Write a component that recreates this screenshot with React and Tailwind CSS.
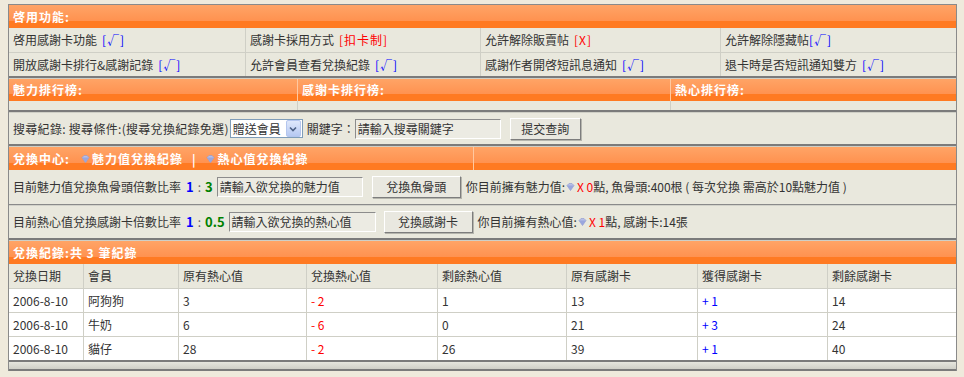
import React from "react";

const font = { fontFamily: '"Noto Sans CJK TC", "Liberation Sans", sans-serif' };

const headBg =
  "bg-[linear-gradient(#ffa466,#ff9250_68%,#ff7a22_70%,#ff7a22)] text-white font-bold text-[12px] tracking-[1px]";

function Gem() {
  return (
    <svg width="9" height="8" viewBox="0 0 9 8" className="inline-block mx-[1px] align-middle">
      <polygon points="1,2.5 3,0.5 6,0.5 8,2.5 4.5,7.5" fill="#b7bfe6" stroke="#8e99cf" strokeWidth="0.6" />
      <polygon points="1,2.5 8,2.5 4.5,7.5" fill="#9aa6dd" />
    </svg>
  );
}

function Sep() {
  return <div className="h-[3px] border-t-2 border-[#7b7b7b] bg-[#cfcfc6]" />;
}

function Ok({ gap = true }) {
  return <span className={`text-[#0000ff] tracking-[1px] ${gap ? "ml-[5px]" : ""}`}>[√]</span>;
}

function Bad({ children }) {
  return <span className="text-[#ff0000] ml-[5px] tracking-[1px]">[{children}]</span>;
}

function Field({ value, w }) {
  return (
    <div
      className={`${w} h-[20px] bg-[#ecebe3] border border-t-[#8c8c8c] border-l-[#8c8c8c] border-b-white border-r-white flex items-center px-[2px] text-[#333] whitespace-nowrap overflow-hidden`}
    >
      {value}
    </div>
  );
}

function Btn({ children, w }) {
  return (
    <div
      className={`${w} h-[22px] bg-[#e9e8e0] border border-t-white border-l-white border-b-[#7d7d7d] border-r-[#7d7d7d] shadow-[1px_1px_0_#b5b5ad] flex items-center justify-center text-[#333]`}
    >
      {children}
    </div>
  );
}

const features = [
  [<>啓用感謝卡功能<Ok /></>, <>感謝卡採用方式<Bad>扣卡制</Bad></>, <>允許解除販賣帖<Bad>X</Bad></>, <>允許解除隱藏帖<Ok gap={false} /></>],
  [<>開放感謝卡排行&amp;感謝記錄<Ok /></>, <>允許會員查看兌換紀錄<Ok /></>, <>感謝作者開啓短訊息通知<Ok /></>, <>退卡時是否短訊通知雙方<Ok /></>],
];

const records = [
  ["2006-8-10", "阿狗狗", "3", "- 2", "1", "13", "+ 1", "14"],
  ["2006-8-10", "牛奶", "6", "- 6", "0", "21", "+ 3", "24"],
  ["2006-8-10", "貓仔", "28", "- 2", "26", "39", "+ 1", "40"],
];

const cols = "grid grid-cols-[74px_95px_128px_131px_129px_131px_130px_1fr]";

export default function App() {
  return (
    <div className="min-h-[377px] bg-[#efeadc] pt-[4px] text-[12px] text-[#333]" style={font}>
      <div className="ml-[8px] w-[949px] border-x border-t border-[#8a8a8a] bg-[#e9e8dd]">
        {/* 啓用功能 */}
        <div className={`${headBg} h-[23px] flex items-center px-[4px]`}>啓用功能:</div>
        {features.map((row, i) => (
          <div key={i} className={`grid grid-cols-[236px_235px_240px_1fr] h-[24px] ${i ? "border-t border-[#cfcfc6]" : ""}`}>
            {row.map((c, j) => (
              <div key={j} className={`flex items-center px-[4px] whitespace-nowrap ${j ? "border-l border-[#cfcfc6]" : ""}`}>
                {c}
              </div>
            ))}
          </div>
        ))}
        <Sep />

        {/* 排行榜 */}
        <div className={`${headBg} h-[22px] grid grid-cols-[288px_373px_1fr]`}>
          <div className="flex items-center px-[4px]">魅力排行榜:</div>
          <div className="flex items-center px-[4px] border-l border-[#ffc8a0]">感謝卡排行榜:</div>
          <div className="flex items-center px-[4px] border-l border-[#ffc8a0]">熱心排行榜:</div>
        </div>
        <div className="grid grid-cols-[288px_373px_1fr] h-[9px]">
          <div />
          <div className="border-l border-[#cfcfc6]" />
          <div className="border-l border-[#cfcfc6]" />
        </div>
        <Sep />

        {/* 搜尋 */}
        <div className="h-[31px] flex items-center px-[4px] whitespace-nowrap">
          <span className="tracking-[0.3px]">搜尋紀錄: 搜尋條件:(搜尋兌換紀錄免選)</span>
          <div className="ml-[1px] h-[19px] w-[73px] bg-white border border-[#7f9db9] flex items-center">
            <span className="flex-1 pl-[2px]">贈送會員</span>
            <div className="w-[15px] h-[17px] mr-[1px] rounded-[2px] bg-[linear-gradient(#dfe8fb,#b6c9f2)] border border-[#b4c6ee] flex items-center justify-center">
              <svg width="8" height="6" viewBox="0 0 8 6">
                <path d="M1 1.5 L4 4.5 L7 1.5" stroke="#4d6185" strokeWidth="1.6" fill="none" />
              </svg>
            </div>
          </div>
          <span className="ml-[4px]">關鍵字：</span>
          <Field value="請輸入搜尋關鍵字" w="w-[146px]" />
          <div className="ml-[9px]">
            <Btn w="w-[71px]">提交查詢</Btn>
          </div>
        </div>
        <Sep />

        {/* 兌換中心 */}
        <div className={`${headBg} h-[23px] grid grid-cols-[464px_1fr]`}>
          <div className="flex items-center px-[4px] gap-[1px]">
            <span className="mr-[9px]">兌換中心:</span>
            <Gem />
            <span>魅力值兌換紀錄</span>
            <span className="mx-[8px]">|</span>
            <Gem />
            <span>熱心值兌換紀錄</span>
          </div>
          <div className="border-l border-[#ffc8a0]" />
        </div>
        <div className="h-[34px] flex items-center px-[4px] whitespace-nowrap">
          <span>目前魅力值兌換魚骨頭倍數比率</span>
          <span className="ml-[5px] text-[#0000ff] font-bold text-[13px]">1</span>
          <span className="mx-[4px] text-[#666]">:</span>
          <span className="text-[#008000] font-bold text-[13px] mr-[4px]">3</span>
          <Field value="請輸入欲兌換的魅力值" w="w-[146px]" />
          <div className="ml-[9px]">
            <Btn w="w-[89px]">兌換魚骨頭</Btn>
          </div>
          <span className="ml-[5px]">你目前擁有魅力值:</span>
          <Gem />
          <span className="text-[#ff0000] ml-[1px]">X 0</span>
          <span>點, 魚骨頭:400根 ( 每次兌換 需高於10點魅力值 )</span>
        </div>
        <div className="h-[2px] border-t border-[#8a8a8a] bg-[#d2d2ca]" />
        <div className="h-[32px] flex items-center px-[4px] whitespace-nowrap">
          <span>目前熱心值兌換感謝卡倍數比率</span>
          <span className="ml-[5px] text-[#0000ff] font-bold text-[13px]">1</span>
          <span className="mx-[4px] text-[#666]">:</span>
          <span className="text-[#008000] font-bold text-[13px] mr-[4px]">0.5</span>
          <Field value="請輸入欲兌換的熱心值" w="w-[147px]" />
          <div className="ml-[8px]">
            <Btn w="w-[89px]">兌換感謝卡</Btn>
          </div>
          <span className="ml-[5px]">你目前擁有熱心值:</span>
          <Gem />
          <span className="text-[#ff0000] ml-[1px]">X 1</span>
          <span>點, 感謝卡:14張</span>
        </div>
        <Sep />

        {/* 兌換紀錄 */}
        <div className={`${headBg} h-[23px] flex items-center px-[4px]`}>兌換紀錄:共 3 筆紀錄</div>
        <div className={`${cols} h-[24px]`}>
          {["兌換日期", "會員", "原有熱心值", "兌換熱心值", "剩餘熱心值", "原有感謝卡", "獲得感謝卡", "剩餘感謝卡"].map((h, j) => (
            <div key={h} className={`flex items-center px-[4px] ${j ? "border-l border-[#cfcfc6]" : ""}`}>
              {h}
            </div>
          ))}
        </div>
        {records.map((r, i) => (
          <div key={i} className={`${cols} h-[24px] bg-white border-t border-[#cfcfc6]`}>
            {r.map((c, j) => (
              <div
                key={j}
                className={`flex items-center px-[4px] ${j ? "border-l border-[#cfcfc6]" : ""} ${
                  j === 3 ? "text-[#ff0000]" : j === 6 ? "text-[#0000ff]" : ""
                }`}
              >
                {c}
              </div>
            ))}
          </div>
        ))}
        <div className="h-[2px] bg-[#7b7b7b]" />
        <div className="h-[7px] bg-[linear-gradient(#e6e6de,#cfcfc7)]" />
        <div className="h-[2px] bg-[#7b7b7b]" />
      </div>
    </div>
  );
}
